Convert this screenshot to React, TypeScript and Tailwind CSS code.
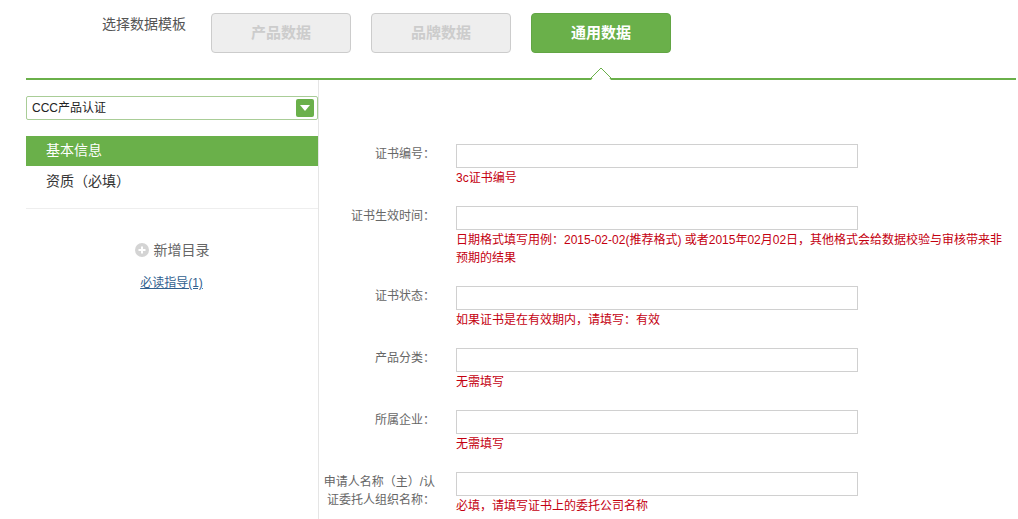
const fields = [
  { label: '证书编号：', hint: '3c证书编号' },
  { label: '证书生效时间：', hint: '日期格式填写用例：2015-02-02(推荐格式) 或者2015年02月02日，其他格式会给数据校验与审核带来非预期的结果' },
  { label: '证书状态：', hint: '如果证书是在有效期内，请填写：有效' },
  { label: '产品分类：', hint: '无需填写' },
  { label: '所属企业：', hint: '无需填写' },
  { label: '申请人名称（主）/认证委托人组织名称：', hint: '必填，请填写证书上的委托公司名称' },
];

const tabs = [
  { name: '产品数据', active: false },
  { name: '品牌数据', active: false },
  { name: '通用数据', active: true },
];

export default function App() {
  return (
    <div className="w-[1018px] h-[519px] overflow-hidden bg-white font-['Liberation_Sans','Noto_Sans_CJK_SC',sans-serif] text-[14px] text-[#666]">
      {/* template tabs */}
      <div className="flex h-[78px] pl-[102px] pt-[13px]">
        <div className="w-[109px] pt-[1px] leading-[20px] text-[#555]">选择数据模板</div>
        <div className="flex gap-[20px]">
          {tabs.map((tab) => (
            <button
              key={tab.name}
              className={
                tab.active
                  ? 'w-[140px] h-[40px] rounded-[4px] border border-[#62a544] bg-[#6ab04a] text-[15px] font-bold text-white'
                  : 'w-[140px] h-[40px] rounded-[4px] border border-[#ccc] bg-[#eee] text-[15px] font-bold text-[#ccc]'
              }
            >
              {tab.name}
            </button>
          ))}
        </div>
      </div>

      <div className="relative ml-[26px] mr-[2px] h-[2px] bg-[#6ab04a]">
        <svg className="absolute left-[563px] top-[-11px]" width="24" height="13" viewBox="0 0 24 13">
          <path d="M2 13 L12 1 L22 13 Z" fill="#fff" />
          <path d="M1 12 L12 1 L23 12" fill="none" stroke="#6ab04a" strokeWidth="1" />
        </svg>
      </div>

      <div className="flex">
        {/* sidebar */}
        <div className="ml-[26px] w-[293px] h-[439px] shrink-0 border-r border-[#e5e5e5] pt-[16px]">
          <div className="flex h-[24px] w-[292px] items-center justify-between rounded-[2px] border border-[#a9cd97] pl-[5px] pr-[3px] text-[12px] text-[#222]">
            <span>CCC产品认证</span>
            <span className="flex h-[18px] w-[18px] items-center justify-center rounded-[2px] bg-[#6ab04a]">
              <svg width="10" height="6" viewBox="0 0 10 6">
                <path d="M0 0 H10 L5 6 Z" fill="#fff" />
              </svg>
            </span>
          </div>
          <div className="mt-[16px] border-b border-[#eee] pb-[12px] w-[292px]">
            <div className="flex h-[30px] items-center bg-[#6ab04a] pb-[2px] pl-[20px] text-white">基本信息</div>
            <div className="flex h-[30px] items-center pl-[20px] text-[#333]">资质（必填）</div>
          </div>
          <div className="mt-[31px] flex items-center justify-center w-[292px] text-[#666]">
            <svg className="mr-[5px]" width="14" height="14" viewBox="0 0 14 14">
              <circle cx="7" cy="7" r="7" fill="#d4d4d4" />
              <path d="M3.5 7 H10.5 M7 3.5 V10.5" stroke="#fff" strokeWidth="2" />
            </svg>
            <span className="leading-[20px]">新增目录</span>
          </div>
          <div className="mt-[13px] w-[292px] pr-[1px] text-center text-[12px] leading-[20px] text-[#31608f] underline">
            必读指导(1)
          </div>
        </div>

        {/* form */}
        <div className="flex-1 pt-[64px]">
          {fields.map((field) => (
            <div key={field.label} className="flex mb-[19px]">
              <label className="w-[116px] shrink-0 pl-[3px] pt-[1px] text-right text-[12px] leading-[18px] text-[#666]">
                {field.label}
              </label>
              <div className="ml-[21px] flex-1 pr-[8px]">
                <input className="block h-[24px] w-[402px] border border-[#d0d0d0] bg-white" />
                <p className="mt-[1px] text-[12px] leading-[18px] text-[#c40010]">{field.hint}</p>
              </div>
            </div>
          ))}
        </div>
      </div>
    </div>
  );
}
